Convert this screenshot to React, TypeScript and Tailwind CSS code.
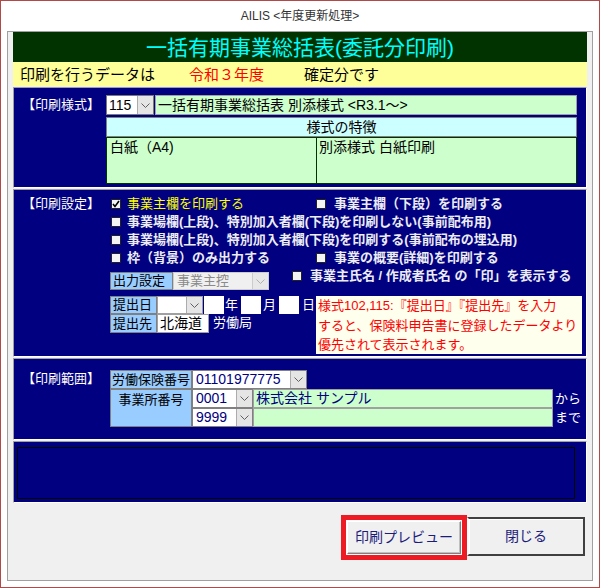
import React from "react";

const Arrow = ({ disabled }: { disabled?: boolean }) => (
  <div
    className={`flex h-full w-[16px] shrink-0 items-center justify-center border-l ${
      disabled ? "border-[#cccccc] bg-[#e8e8e8]" : "border-[#acacac] bg-[#e5e5e5]"
    }`}
  >
    <svg width="9" height="5" viewBox="0 0 9 5">
      <polyline
        points="0.5,0.5 4.5,4.5 8.5,0.5"
        fill="none"
        stroke={disabled ? "#b0b0b0" : "#606060"}
      />
    </svg>
  </div>
);

const Check = ({ checked }: { checked?: boolean }) => (
  <span className="flex h-[10px] w-[10px] shrink-0 items-center justify-center border border-[#222] bg-[#f4f4f4]">
    {checked && (
      <svg width="8" height="8" viewBox="0 0 8 8">
        <path d="M1 4 L3 6.5 L7 1" stroke="black" strokeWidth="1.6" fill="none" />
      </svg>
    )}
  </span>
);

const section =
  "border border-t-[#a0a0a0] border-l-[#a0a0a0] border-r-white border-b-white bg-[#000080]";

const wlabel = "font-bold text-[#ececf4]";

export default function App() {
  return (
    <div className="flex h-[588px] w-[600px] flex-col border border-[#b24848] bg-white font-['Liberation_Sans','Noto_Sans_CJK_JP',sans-serif] text-black">
      <div className="flex h-[30px] items-center justify-center text-[12px] text-[#333]">
        AILIS &lt;年度更新処理&gt;
      </div>
      <div className="mx-[6px] mb-[6px] flex flex-1 flex-col border border-[#a0a0a0] bg-[#f0f0f0] px-[5px]">
        <div className="flex h-[30px] items-center justify-center bg-[#003300] text-[21px] leading-none text-[#00ffff]">
          一括有期事業総括表(委託分印刷)
        </div>
        <div className="flex h-[24px] items-center bg-[#ffff99] pl-[7px] text-[15px] leading-none">
          <span className="w-[169px]">印刷を行うデータは</span>
          <span className="w-[115px] text-[#ff0000]">令和３年度</span>
          <span>確定分です</span>
        </div>

        {/* 印刷様式 */}
        <div className={`mt-px flex h-[101px] pt-[7px] ${section}`}>
          <div className="w-[92px] pl-[8px] text-[13px] leading-[20px] text-white">【印刷様式】</div>
          <div className="flex w-[471px] flex-col text-[14px] leading-[18px]">
            <div className="flex h-[20px]">
              <div className="flex w-[48px] border border-[#7a7a7a] bg-white">
                <span className="flex-1 pl-[2px]">115</span>
                <Arrow />
              </div>
              <div className="ml-px flex-1 border border-[#a0a0a0] bg-[#ccffcc] pl-[2px]">
                一括有期事業総括表 別添様式 &lt;R3.1～&gt;
              </div>
            </div>
            <div className="mt-[2px] h-[20px] border border-[#808080] bg-[#ccffff] text-center">
              様式の特徴
            </div>
            <div className="flex h-[47px] border border-[#003300] bg-[#ccffcc]">
              <div className="w-[210px] border-r border-[#003300] pl-[3px]">白紙（A4)</div>
              <div className="flex-1 pl-[2px]">別添様式 白紙印刷</div>
            </div>
          </div>
        </div>

        {/* 印刷設定 */}
        <div className={`mt-px flex h-[168px] pt-[5px] ${section}`}>
          <div className="w-[96px] pl-[8px] text-[13px] leading-[18px] text-white">【印刷設定】</div>
          <div className="flex flex-1 flex-col text-[13px] leading-[18px]">
            <div className="flex h-[18px]">
              <div className="flex w-[206px] items-center pl-px">
                <Check checked />
                <span className="ml-[6px] text-[#ffff00]">事業主欄を印刷する</span>
              </div>
              <div className="flex items-center">
                <Check />
                <span className={`ml-[8px] ${wlabel}`}>事業主欄（下段）を印刷する</span>
              </div>
            </div>
            <div className="flex h-[18px] items-center pl-px">
              <Check />
              <span className={`ml-[6px] ${wlabel}`}>
                事業場欄(上段)、特別加入者欄(下段)を印刷しない(事前配布用)
              </span>
            </div>
            <div className="flex h-[18px] items-center pl-px">
              <Check />
              <span className={`ml-[6px] ${wlabel}`}>
                事業場欄(上段)、特別加入者欄(下段)を印刷する(事前配布の埋込用)
              </span>
            </div>
            <div className="flex h-[18px]">
              <div className="flex w-[206px] items-center pl-px">
                <Check />
                <span className={`ml-[6px] ${wlabel}`}>枠（背景）のみ出力する</span>
              </div>
              <div className="flex items-center">
                <Check />
                <span className={`ml-[8px] ${wlabel}`}>事業の概要(詳細)を印刷する</span>
              </div>
            </div>
            <div className="flex h-[23px]">
              <div className="mt-[5px] flex h-[18px] w-[159px]">
                <div className="w-[63px] border border-[#808080] bg-[#99ccff] pl-[2px] leading-[16px]">
                  出力設定
                </div>
                <div className="flex flex-1 border border-[#cccccc] bg-[#f0f0f0]">
                  <span className="flex-1 pl-[3px] leading-[16px] text-[#8a8a8a]">事業主控</span>
                  <Arrow disabled />
                </div>
              </div>
              <div className="ml-[23px] flex h-[18px] items-center">
                <Check />
                <span className={`ml-[8px] ${wlabel}`}>
                  事業主氏名 / 作成者氏名 の「印」を表示する
                </span>
              </div>
            </div>
            <div className="mt-[6px] flex">
              <div className="flex w-[206px] flex-col">
                <div className="flex h-[18px]">
                  <div className="w-[47px] border border-[#808080] bg-[#99ccff] pl-[2px] leading-[16px]">
                    提出日
                  </div>
                  <div className="flex w-[46px] border border-[#a0a0a0] bg-white">
                    <span className="flex-1" />
                    <Arrow />
                  </div>
                  <div className="ml-px w-[20px] bg-white" />
                  <span className="w-[17px] pl-px text-white">年</span>
                  <div className="w-[20px] bg-white" />
                  <span className="w-[18px] pl-[2px] text-white">月</span>
                  <div className="w-[20px] bg-white" />
                  <span className="pl-[3px] text-white">日</span>
                </div>
                <div className="flex h-[19px]">
                  <div className="w-[47px] border border-[#808080] bg-[#99ccff] pl-[2px] leading-[17px]">
                    提出先
                  </div>
                  <div className="w-[52px] border border-[#a0a0a0] bg-white pl-[2px] text-[14px] leading-[17px]">
                    北海道
                  </div>
                  <span className="ml-[4px] text-white">労働局</span>
                </div>
              </div>
              <div className="h-[58px] w-[266px] whitespace-nowrap bg-[#ffffee] pl-[2px] text-[13px] leading-[19.5px] text-[#ff0000]">
                様式102,115:『提出日』『提出先』を入力
                <br />
                すると、保険料申告書に登録したデータより
                <br />
                優先されて表示されます。
              </div>
            </div>
          </div>
        </div>

        {/* 印刷範囲 */}
        <div className={`mt-px flex h-[82px] pt-[11px] ${section}`}>
          <div className="w-[96px] pl-[8px] text-[13px] leading-[18px] text-white">【印刷範囲】</div>
          <div className="flex flex-col text-[13px]">
            <div className="flex h-[19px]">
              <div className="w-[82px] border border-[#808080] bg-[#99ccff] text-center leading-[17px]">
                労働保険番号
              </div>
              <div className="flex w-[115px] border border-[#808080] bg-white">
                <span className="flex-1 pl-[3px] text-[14px] leading-[17px] text-[#000080]">01101977775</span>
                <Arrow />
              </div>
            </div>
            <div className="flex">
              <div className="h-[38px] w-[82px] border border-[#808080] bg-[#99ccff] text-center leading-[19px]">
                事業所番号
              </div>
              <div className="flex flex-col text-[14px] leading-[17px]">
                <div className="flex h-[19px]">
                  <div className="flex w-[61px] border border-[#808080] bg-white">
                    <span className="flex-1 pl-[3px] text-[#000080]">0001</span>
                    <Arrow />
                  </div>
                  <div className="w-[300px] border border-[#a0a0a0] bg-[#ccffcc] pl-[2px] text-[#000080]">
                    株式会社 サンプル
                  </div>
                  <span className="ml-[2px] text-[13px] leading-[19px] text-white">から</span>
                </div>
                <div className="flex h-[19px]">
                  <div className="flex w-[61px] border border-[#808080] bg-white">
                    <span className="flex-1 pl-[3px] text-[#000080]">9999</span>
                    <Arrow />
                  </div>
                  <div className="w-[300px] border border-[#a0a0a0] bg-[#ccffcc]" />
                  <span className="ml-[2px] text-[13px] leading-[19px] text-white">まで</span>
                </div>
              </div>
            </div>
          </div>
        </div>

        {/* メッセージ */}
        <div className={`mt-px flex h-[62px] pb-[3px] pl-[3px] pr-[11px] pt-[5px] ${section}`}>
          <div className="flex-1 border border-black" />
        </div>

        <div className="flex justify-end pr-[2px] pt-[12px]">
          <div className="flex h-[45px] w-[126px] border-[5px] border-[#ed1c24] bg-white p-px">
            <button className="flex flex-1 items-center justify-center border border-b-[#808080] border-l-white border-r-[#808080] border-t-white bg-[#f0f0f0] text-[14px] text-[#1c1c7c] shadow-[inset_-1px_-1px_0_#c0c0c0]">
              印刷プレビュー
            </button>
          </div>
          <button className="mt-[2px] flex h-[39px] w-[118px] items-center justify-center border-2 border-[#404040] border-l-white bg-[#f0f0f0] text-[14px] text-[#1c1c7c] shadow-[inset_1px_1px_0_white]">
            閉じる
          </button>
        </div>
      </div>
    </div>
  );
}
